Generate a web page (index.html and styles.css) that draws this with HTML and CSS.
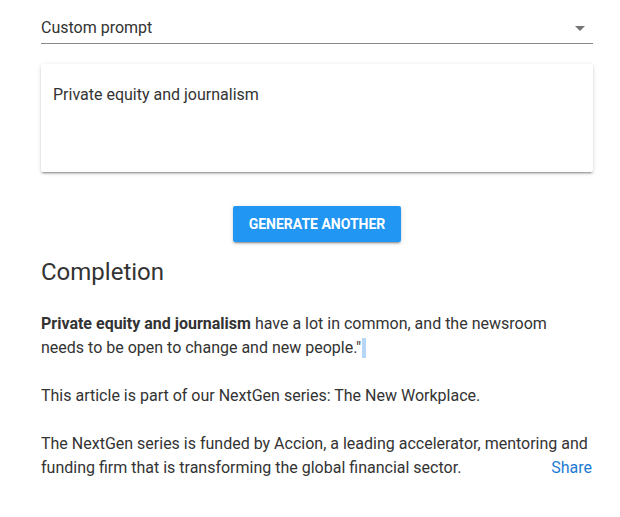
FILE: index.html
```html
<!DOCTYPE html>
<html>
<head>
<meta charset="utf-8">
<link rel="stylesheet" href="styles.css">
</head>
<body>
<div class="page">
  <div class="select">
    <span class="select-value">Custom prompt</span>
    <span class="select-arrow"></span>
  </div>
  <div class="card">
    <div class="prompt">Private equity and journalism</div>
  </div>
  <div class="actions">
    <button class="btn">Generate another</button>
  </div>
  <h2 class="heading">Completion</h2>
  <div class="completion">
    <p><strong>Private equity and journalism</strong> have a lot in common, and the newsroom needs to be open to change and new people."<span class="caret"></span></p>
    <p>This article is part of our NextGen series: The New Workplace.</p>
    <div class="last">
      <p>The NextGen series is funded by Accion, a leading accelerator, mentoring and funding firm that is transforming the global financial sector.</p>
      <a class="share">Share</a>
    </div>
  </div>
</div>
</body>
</html>
```
FILE: styles.css
```css
html, body {
  margin: 0;
  padding: 0;
  background: #fff;
}
body {
  font-family: Roboto, "Noto Sans", sans-serif;
  color: #333;
}
.page {
  width: 552px;
  padding: 15px 0 0 41px;
}
.select {
  display: flex;
  align-items: center;
  justify-content: space-between;
  height: 28px;
  border-bottom: 1px solid #8a8a8a;
}
.select-value {
  font-size: 16px;
  line-height: 24px;
  padding-bottom: 2px;
}
.select-arrow {
  width: 0;
  height: 0;
  border-left: 5px solid transparent;
  border-right: 5px solid transparent;
  border-top: 5px solid #757575;
  margin-right: 8px;
  margin-bottom: 2px;
}
.card {
  margin-top: 20px;
  height: 108px;
  box-sizing: border-box;
  padding: 19px 12px 17px;
  background: #fff;
  border-radius: 2px;
  box-shadow: 0 3px 1px -2px rgba(0,0,0,.2), 0 2px 2px 0 rgba(0,0,0,.14), 0 1px 5px 0 rgba(0,0,0,.12);
}
.prompt {
  font-size: 16px;
  line-height: 24px;
}
.actions {
  display: flex;
  justify-content: center;
  margin-top: 34px;
}
.btn {
  height: 36px;
  border: none;
  border-radius: 2px;
  background: #2196f3;
  color: #fff;
  font-family: Roboto, sans-serif;
  font-weight: 700;
  font-size: 14px;
  text-transform: uppercase;
  white-space: nowrap;
  padding: 0 16px;
  box-shadow: 0 3px 1px -2px rgba(0,0,0,.2), 0 2px 2px 0 rgba(0,0,0,.14), 0 1px 5px 0 rgba(0,0,0,.12);
}
.heading {
  margin: 14px 0 0;
  font-size: 24px;
  font-weight: 400;
  line-height: 32px;
  color: #333;
}
.completion {
  margin-top: 24px;
  font-size: 16px;
  line-height: 24px;
}
.completion p {
  margin: 0 0 24px;
}
.caret {
  display: inline-block;
  width: 4px;
  height: 20px;
  background: #b7d6f5;
  vertical-align: -5px;
  margin-left: 1px;
}
.last {
  display: grid;
}
.last p {
  grid-area: 1 / 1;
  margin: 0;
}
.share {
  grid-area: 1 / 1;
  justify-self: end;
  align-self: end;
  color: #1e7bd2;
  margin-right: 1px;
}
```
